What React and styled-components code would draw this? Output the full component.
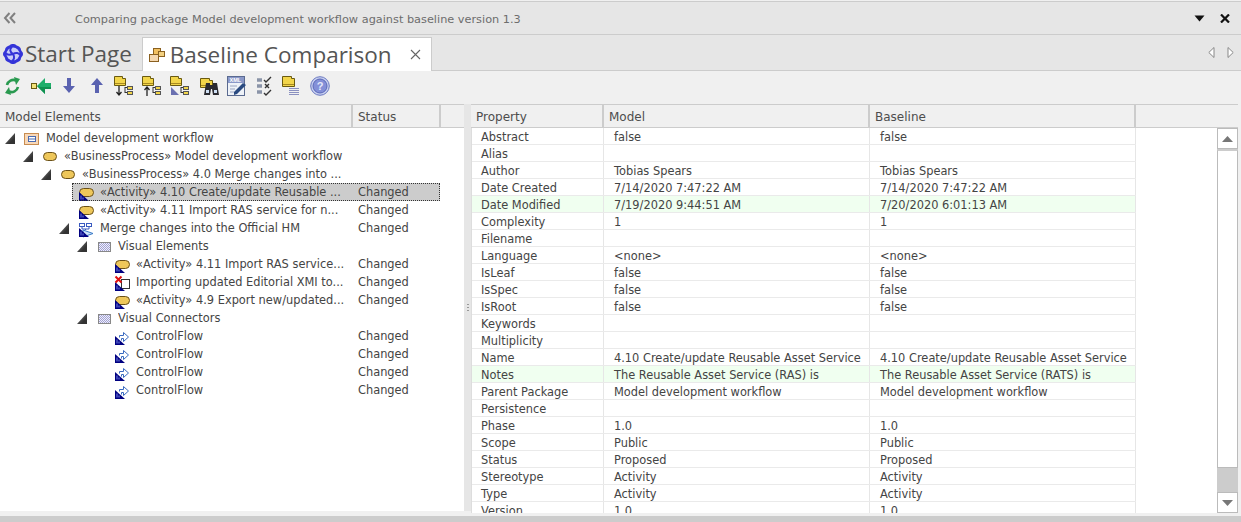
import React from "react";
import styled, { createGlobalStyle } from "styled-components";

const UI_FONT = `"DejaVu Sans", Verdana, sans-serif`;

const GlobalStyle = createGlobalStyle`
  html, body { margin: 0; padding: 0; background: #f0f0f0; }
  #root { height: 522px; overflow: hidden; }
`;

const Page = styled.div`
  height: 522px;
  display: flex;
  flex-direction: column;
  font-family: ${UI_FONT};
  font-size: 11.4px;
  color: #444;
  background: #f0f0f0;
`;

const TitleBar = styled.div`
  height: 32px;
  margin-top: 1px;
  flex: none;
  display: flex;
  align-items: center;
  background: #e6e6e6;
  border-top: 1px solid #ccc;
  border-bottom: 1px solid #ccc;
  padding: 0 11px 0 3px;
`;

const TitleText = styled.span`
  margin-left: 58px;
  padding-top: 2px;
  color: #6d6d6d;
  font-size: 11.3px;
  flex: 1;
`;

const TabStrip = styled.div`
  height: 35px;
  flex: none;
  display: flex;
  align-items: flex-end;
  background: #e6e6e6;
  border-bottom: 1px solid #ccc;
  padding: 0 4px 0 2px;
  font-family: "Open Sans", sans-serif;
`;

const Tab = styled.div`
  height: ${(p) => (p.$active ? "34px" : "33px")};
  display: flex;
  align-items: center;
  gap: ${(p) => (p.$active ? "5px" : "1px")};
  box-sizing: border-box;
  font-size: 22.5px;
  color: #555;
  padding: ${(p) => (p.$active ? "0 10px 0 5px" : "0 10px 0 0")};
  background: ${(p) => (p.$active ? "#fff" : "transparent")};
  border: ${(p) => (p.$active ? "1px solid #ccc" : "none")};
  border-bottom: none;
  margin-bottom: ${(p) => (p.$active ? "-1px" : "0")};
`;

const TabClose = styled.span`
  margin-left: 13px;
  display: flex;
`;

const StripArrows = styled.div`
  margin-left: auto;
  align-self: center;
  display: flex;
  gap: 12px;
  padding-right: 3px;
`;

const Toolbar = styled.div`
  height: 33px;
  flex: none;
  box-sizing: border-box;
  display: flex;
  align-items: center;
  gap: 7.85px;
  padding: 0 0 3px 3px;
  background: #f0f0f0;
`;

const ToolIcon = styled.svg`
  width: 20px;
  height: 20px;
  flex: none;
  overflow: visible;
`;

const Panes = styled.div`
  flex: 1;
  min-height: 0;
  display: flex;
`;

const LeftPane = styled.div`
  width: 464px;
  flex: none;
  display: flex;
  flex-direction: column;
  margin-bottom: 5px;
`;

const Splitter = styled.div`
  width: 7px;
  flex: none;
  background: #e6e6e6;
  display: flex;
  align-items: center;
  justify-content: center;
  margin-bottom: 5px;
`;

const Grip = styled.div`
  width: 2px;
  height: 8px;
  background: repeating-linear-gradient(#999 0 1px, transparent 1px 3px);
`;

const RightPane = styled.div`
  flex: 1;
  min-width: 0;
  display: flex;
  flex-direction: column;
  padding-right: 3px;
  margin-bottom: 3px;
`;

const HeaderRow = styled.div`
  height: 24px;
  flex: none;
  box-sizing: border-box;
  display: grid;
  grid-template-columns: ${(p) => p.$cols};
  background: #f0f0f0;
  border-top: 1px solid #ccc;
  border-bottom: 1px solid #ccc;
`;

const HeaderCell = styled.div`
  display: flex;
  align-items: center;
  padding-left: 5px;
  padding-top: 1px;
  font-size: 12px;
  border-right: 2px solid #ccc;
  color: #4d4d4d;
  white-space: nowrap;
  &:last-child { border-right: none; }
`;

const TreeBody = styled.div`
  flex: 1;
  background: #fff;
  padding-top: 1px;
  min-height: 0;
`;

const TreeRow = styled.div`
  height: 18px;
  width: 440px;
  display: flex;
  align-items: stretch;
  padding-left: ${(p) => p.$level * 18}px;
  box-sizing: border-box;
`;

const Expander = styled.span`
  width: 18px;
  flex: none;
  display: flex;
  align-items: center;
  justify-content: flex-start;
  padding: 1px 0 0 5px;
  box-sizing: border-box;
`;

const RowContent = styled.div`
  flex: 1;
  min-width: 0;
  display: flex;
  align-items: center;
  box-sizing: border-box;
  padding-left: 6px;
  background: ${(p) => (p.$selected ? "#cccccc" : "transparent")};
  outline: ${(p) => (p.$selected ? "1px dotted #333" : "none")};
  outline-offset: -1px;
  white-space: nowrap;
`;

const TreeIcon = styled.svg`
  width: 16px;
  height: 16px;
  flex: none;
  margin-right: 6px;
  overflow: visible;
`;

const NodeName = styled.span`
  flex: 1;
  overflow: hidden;
`;

const NodeStatus = styled.span`
  width: 82px;
  flex: none;
`;

const PropBody = styled.div`
  flex: 1;
  min-height: 0;
  overflow: hidden;
  display: flex;
  background: #fff;
`;

const PropList = styled.div`
  width: 665px;
  flex: none;
  border-left: 1px solid #ddd;
  box-sizing: border-box;
`;

const PropRow = styled.div`
  height: 17px;
  display: grid;
  grid-template-columns: 132px 266px 266px;
  box-sizing: border-box;
  border-bottom: 1px solid #eaeaea;
  background: ${(p) => (p.$diff ? "#f0fff0" : "#fff")};
`;

const PropCell = styled.div`
  padding-left: ${(p) => p.$pad}px;
  line-height: 18px;
  border-right: 1px solid #e6e6e6;
  white-space: nowrap;
  overflow: hidden;
`;

const ScrollArea = styled.div`
  flex: 1;
  display: flex;
  justify-content: flex-end;
`;

const ScrollBar = styled.div`
  width: 21px;
  display: flex;
  flex-direction: column;
  background: #ccc;
`;

const ScrollButton = styled.div`
  height: 21px;
  flex: none;
  box-sizing: border-box;
  background: #fff;
  border: 1px solid #bbb;
  display: flex;
  align-items: center;
  justify-content: center;
`;

const ScrollThumb = styled.div`
  height: 318px;
  flex: none;
  box-sizing: border-box;
  background: #fff;
  border: 1px solid #bbb;
  border-top-color: #ccc;
  margin-top: 1px;
`;

const ScrollGap = styled.div`
  flex: 1;
`;

const StatusStrip = styled.div`
  height: 6px;
  flex: none;
  background: #cccccc;
`;

/* ---------- drawn icons ---------- */

const Triangle = () => (
  <svg width="10" height="11" viewBox="0 0 10 11">
    <defs>
      <linearGradient id="expander" x1="0" y1="0" x2="1" y2="1">
        <stop offset="0" stopColor="#8a8a8a" />
        <stop offset="0.7" stopColor="#333" />
      </linearGradient>
    </defs>
    <polygon points="0,11 10,0 10,11" fill="url(#expander)" />
  </svg>
);

const Mark = () => (
  <>
    <polygon points="1,8 1,17 11,17" fill="#000080" />
    <path d="M3 11.5v4M5 13.5v2" stroke="#7a88e8" />
  </>
);

const Pill = ({ x = 0, y = 3, w = 15 }) => (
  <rect x={x + 0.5} y={y + 0.5} width={w} height="8" rx="4" fill="#eec75a" stroke="#6a5018" />
);

const NodeIcon = ({ kind }) => {
  if (kind === "package")
    return (
      <TreeIcon viewBox="0 0 16 16">
        <rect x="0.5" y="3.5" width="14" height="11" fill="#f8d8b8" stroke="#c88c50" />
        <rect x="4.5" y="6.5" width="7" height="5" fill="#fff" stroke="#4a6ab0" />
        <line x1="4.5" y1="9" x2="11.5" y2="9" stroke="#4a6ab0" />
      </TreeIcon>
    );
  if (kind === "process")
    return (
      <TreeIcon viewBox="0 0 16 16">
        <Pill x={1} y={4} w={13} />
      </TreeIcon>
    );
  if (kind === "activity")
    return (
      <TreeIcon viewBox="0 0 16 16">
        <Pill x={1} y={4} w={14} />
        <Mark />
      </TreeIcon>
    );
  if (kind === "diagram")
    return (
      <TreeIcon viewBox="0 0 16 16">
        <rect x="1.5" y="3.5" width="5" height="3" fill="#fff" stroke="#3a5ac0" />
        <rect x="8.5" y="3.5" width="5" height="3" fill="#fff" stroke="#3a5ac0" />
        <path d="M4 7v2h7V7M7.5 9v1" stroke="#3a5ac0" fill="none" />
        <polygon points="5,10 5,17 15,13.5" fill="#cfe4f8" stroke="#3a7ac8" />
        <Mark />
      </TreeIcon>
    );
  if (kind === "group")
    return (
      <TreeIcon viewBox="0 0 16 16">
        <defs>
          <pattern id="dither" width="2" height="2" patternUnits="userSpaceOnUse">
            <rect width="2" height="2" fill="#eef" />
            <rect width="1" height="1" fill="#a4a4d0" />
            <rect x="1" y="1" width="1" height="1" fill="#a4a4d0" />
          </pattern>
        </defs>
        <rect x="2.5" y="4.5" width="12" height="9" fill="url(#dither)" stroke="#888" />
      </TreeIcon>
    );
  if (kind === "deleted")
    return (
      <TreeIcon viewBox="0 0 16 16">
        <rect x="7.5" y="5.5" width="8" height="9" fill="#fff" stroke="#333" />
        <Mark />
        <path d="M1.5 2.5l6 6M7.5 2.5l-6 6" stroke="#e01010" strokeWidth="2" />
      </TreeIcon>
    );
  return (
    <TreeIcon viewBox="0 0 16 16">
      <path d="M5.5 9.5v-2h4V4.5L14.5 9l-5 4.5V10.5h-2v2" fill="#fff" stroke="#3a6ac0" />
      <Mark />
    </TreeIcon>
  );
};

const Folder = ({ x = 0, y = 0, w = 11, h = 9 }) => (
  <>
    <path
      d={`M${x + 0.5} ${y + 0.5}h${w - 3}v2h3v${h - 2}h-${w}z`}
      fill="#f2d54a"
      stroke="#6a5a10"
    />
    <path d={`M${x + 1} ${y + h - 1.5}h${w - 1}`} stroke="#a88a20" />
  </>
);

const MiniBoxes = () => (
  <>
    <path d="M11 11v6M11 11.5h2M11 16.5h2" stroke="#333" fill="none" />
    <rect x="13.5" y="10.5" width="5" height="3" fill="#f2d54a" stroke="#555" />
    <rect x="13.5" y="15.5" width="5" height="3" fill="#f2d54a" stroke="#555" />
  </>
);

const tools = [
  <>
    <path d="M4 9a6.5 6.5 0 0 1 9-4.5" fill="none" stroke="#2a9a50" strokeWidth="2.6" />
    <polygon points="11,1 17,3 13,9" fill="#2a9a50" />
    <path d="M15 11a6.5 6.5 0 0 1-9 4.5" fill="none" stroke="#2a9a50" strokeWidth="2.6" />
    <polygon points="8,19 2,17 6,11" fill="#2a9a50" />
  </>,
  <>
    <rect x="0.5" y="7.5" width="5" height="5" fill="#f2e27a" stroke="#6a5a10" />
    <polygon points="6,10 14,2 14,7 20,7 20,13 14,13 14,18" fill="#1eae6a" />
    <polygon points="6,10 14,18 14,13 20,13 20,11 10,11" fill="#109050" />
  </>,
  <polygon points="8,2 12,2 12,10 16,10 10,17 4,10 8,10" fill="#5a62b0" />,
  <polygon points="8,17 12,17 12,9 16,9 10,2 4,9 8,9" fill="#5a62b0" />,
  <>
    <Folder />
    <path d="M5 10v9M2.5 16L5 19l2.5-3" stroke="#222" strokeWidth="1.3" fill="none" />
    <MiniBoxes />
  </>,
  <>
    <Folder />
    <path d="M5 11v9M2.5 14L5 11l2.5 3" stroke="#222" strokeWidth="1.3" fill="none" />
    <MiniBoxes />
  </>,
  <>
    <Folder />
    <polygon points="1,11 1,19 9,19" fill="#6a70b0" />
    <MiniBoxes />
  </>,
  <>
    <Folder x={2} y={2} w={12} h={9} />
    <path d="M8 7h4v2h3V7h4l2 12h-6l-1-6h-1l-1 6H6z" fill="#2a2a30" />
    <rect x="8" y="14" width="3" height="3" fill="#cfe0f5" />
    <rect x="16" y="14" width="3" height="3" fill="#cfe0f5" />
  </>,
  <>
    <rect x="1.5" y="0.5" width="17" height="19" fill="#eef2f8" stroke="#5a6a90" />
    <rect x="2" y="1" width="16" height="6" fill="#8a98c8" />
    <text x="3.5" y="6" fontSize="5.5" fontWeight="bold" fill="#fff" fontFamily="Liberation Sans, sans-serif">XML</text>
    <path d="M4 10h7M4 13h5M4 16h4" stroke="#9aa4c0" />
    <path d="M8 16l9-9 3 2-9 9-3 1z" fill="#2a4a80" />
  </>,
  <>
    <path d="M3 4h5M3 10h5M3 16h5" stroke="#8a94a8" strokeWidth="3.5" />
    <path d="M10 4l2 2 5-5M10 17l2 2 5-5" stroke="#333" strokeWidth="1.4" fill="none" />
    <path d="M11 8l4 4M15 8l-4 4" stroke="#333" strokeWidth="1.4" />
  </>,
  <>
    <Folder x={1} y={0} w={12} h={10} />
    <path d="M8 12.5h10M8 14.5h10M8 16.5h10M8 18.5h10" stroke="#8a90c0" />
  </>,
  <>
    <circle cx="11" cy="10" r="9.3" fill="#c8d0f0" stroke="#6a78c0" />
    <circle cx="11" cy="10" r="7" fill="#8490d8" stroke="#5a68b8" />
    <text x="11" y="14" fontSize="11" fontWeight="bold" fill="#e4e8fa" textAnchor="middle" fontFamily="Liberation Sans, sans-serif">?</text>
  </>,
];

const AppLogo = () => (
  <svg width="22" height="22" viewBox="0 0 22 22">
    <path
      d="M11 1c3 0 3 1.6 5 2 2 1 3 2 3 4 1 2 2 2 2 4s-1 2-2 4c0 2-1 3-3 4-2 .4-2 2-5 2s-3-1.6-5-2c-2-1-3-2-3-4-1-2-2-2-2-4s1-2 2-4c0-2 1-3 3-4 2-.4 2-2 5-2z"
      fill="#3434d8"
    />
    <circle cx="11" cy="11" r="6.5" fill="#c8ccf8" />
    <path d="M11 11C8 9 7 6 10 4M11 11c3-2 6-1 7 1M11 11c2 3 1 6-1 7M11 11c-3 1-6 1-7-1" fill="none" stroke="#3434d8" strokeWidth="2" />
  </svg>
);

const BaselineIcon = () => (
  <svg width="17" height="16" viewBox="0 0 17 16">
    <rect x="5.5" y="1.5" width="7" height="6" fill="#f2c060" stroke="#8a6020" />
    <rect x="10.5" y="4.5" width="6" height="5" fill="#f2d080" stroke="#8a6020" />
    <rect x="1.5" y="7.5" width="9" height="7" fill="#f5d8b0" stroke="#8a6020" />
  </svg>
);

/* ---------- data ---------- */

const treeRows = [
  { level: 0, open: true, icon: "package", name: "Model development workflow" },
  { level: 1, open: true, icon: "process", name: "«BusinessProcess» Model development workflow" },
  { level: 2, open: true, icon: "process", name: "«BusinessProcess» 4.0 Merge changes into ..." },
  { level: 3, icon: "activity", name: "«Activity» 4.10 Create/update Reusable ...", status: "Changed", selected: true },
  { level: 3, icon: "activity", name: "«Activity» 4.11 Import RAS service for n...", status: "Changed" },
  { level: 3, open: true, icon: "diagram", name: "Merge changes into the Official HM", status: "Changed" },
  { level: 4, open: true, icon: "group", name: "Visual Elements" },
  { level: 5, icon: "activity", name: "«Activity» 4.11 Import RAS service...", status: "Changed" },
  { level: 5, icon: "deleted", name: "Importing updated Editorial XMI to...", status: "Changed" },
  { level: 5, icon: "activity", name: "«Activity» 4.9 Export new/updated...", status: "Changed" },
  { level: 4, open: true, icon: "group", name: "Visual Connectors" },
  { level: 5, icon: "flow", name: "ControlFlow", status: "Changed" },
  { level: 5, icon: "flow", name: "ControlFlow", status: "Changed" },
  { level: 5, icon: "flow", name: "ControlFlow", status: "Changed" },
  { level: 5, icon: "flow", name: "ControlFlow", status: "Changed" },
];

const sameProps = [
  ["Abstract", "false"],
  ["Alias", ""],
  ["Author", "Tobias Spears"],
  ["Date Created", "7/14/2020 7:47:22 AM"],
  ["Date Modified", "7/19/2020 9:44:51 AM", "7/20/2020 6:01:13 AM"],
  ["Complexity", "1"],
  ["Filename", ""],
  ["Language", "<none>"],
  ["IsLeaf", "false"],
  ["IsSpec", "false"],
  ["IsRoot", "false"],
  ["Keywords", ""],
  ["Multiplicity", ""],
  ["Name", "4.10 Create/update Reusable Asset Service"],
  ["Notes", "The Reusable Asset Service (RAS) is", "The Reusable Asset Service (RATS) is"],
  ["Parent Package", "Model development workflow"],
  ["Persistence", ""],
  ["Phase", "1.0"],
  ["Scope", "Public"],
  ["Status", "Proposed"],
  ["Stereotype", "Activity"],
  ["Type", "Activity"],
  ["Version", "1.0"],
];

export default function App() {
  return (
    <Page>
      <GlobalStyle />
      <TitleBar>
        <svg width="14" height="14" viewBox="0 0 14 14">
          <path d="M6.5 2L2 7l4.5 5M12 2L7.5 7l4.5 5" fill="none" stroke="#808080" strokeWidth="2" />
        </svg>
        <TitleText>Comparing package Model development workflow against baseline version 1.3</TitleText>
        <svg width="11" height="7" viewBox="0 0 11 7">
          <polygon points="0.5,0.5 10.5,0.5 5.5,6.5" fill="#111" />
        </svg>
        <svg width="10" height="9" viewBox="0 0 10 9" style={{ marginLeft: 15 }}>
          <path d="M1 0.5l8 8M9 0.5l-8 8" stroke="#111" strokeWidth="2.2" />
        </svg>
      </TitleBar>
      <TabStrip>
        <Tab>
          <AppLogo />
          Start Page
        </Tab>
        <Tab $active>
          <BaselineIcon />
          Baseline Comparison
          <TabClose>
            <svg width="11" height="11" viewBox="0 0 11 11">
              <path d="M1 1l9 9M10 1l-9 9" stroke="#666" strokeWidth="1.1" />
            </svg>
          </TabClose>
        </Tab>
        <StripArrows>
          <svg width="7" height="11" viewBox="0 0 7 11">
            <polygon points="6,0.5 6,10.5 0.8,5.5" fill="#fff" stroke="#888" />
          </svg>
          <svg width="7" height="11" viewBox="0 0 7 11">
            <polygon points="1,0.5 1,10.5 6.2,5.5" fill="#fff" stroke="#888" />
          </svg>
        </StripArrows>
      </TabStrip>
      <Toolbar>
        {tools.map((t, i) => (
          <ToolIcon key={i} viewBox="0 0 20 20">
            {t}
          </ToolIcon>
        ))}
      </Toolbar>
      <Panes>
        <LeftPane>
          <HeaderRow $cols="353px 88px 1fr">
            <HeaderCell>Model Elements</HeaderCell>
            <HeaderCell>Status</HeaderCell>
            <HeaderCell />
          </HeaderRow>
          <TreeBody>
            {treeRows.map((r, i) => (
              <TreeRow key={i} $level={r.level}>
                <Expander>{r.open && <Triangle />}</Expander>
                <RowContent $selected={r.selected}>
                  <NodeIcon kind={r.icon} />
                  <NodeName>{r.name}</NodeName>
                  <NodeStatus>{r.status}</NodeStatus>
                </RowContent>
              </TreeRow>
            ))}
          </TreeBody>
        </LeftPane>
        <Splitter>
          <Grip />
        </Splitter>
        <RightPane>
          <HeaderRow $cols="133px 266px 266px 1fr">
            <HeaderCell>Property</HeaderCell>
            <HeaderCell>Model</HeaderCell>
            <HeaderCell>Baseline</HeaderCell>
            <HeaderCell />
          </HeaderRow>
          <PropBody>
            <PropList>
              {sameProps.map(([name, model, base]) => (
                <PropRow key={name} $diff={base !== undefined}>
                  <PropCell $pad={9}>{name}</PropCell>
                  <PropCell $pad={10}>{model}</PropCell>
                  <PropCell $pad={10}>{base !== undefined ? base : model}</PropCell>
                </PropRow>
              ))}
            </PropList>
            <ScrollArea>
              <ScrollBar>
                <ScrollButton>
                  <svg width="11" height="6" viewBox="0 0 11 6">
                    <polygon points="0,6 11,6 5.5,0" fill="#777" />
                  </svg>
                </ScrollButton>
                <ScrollThumb />
                <ScrollGap />
                <ScrollButton>
                  <svg width="11" height="6" viewBox="0 0 11 6">
                    <polygon points="0,0 11,0 5.5,6" fill="#777" />
                  </svg>
                </ScrollButton>
              </ScrollBar>
            </ScrollArea>
          </PropBody>
        </RightPane>
      </Panes>
      <StatusStrip />
    </Page>
  );
}
